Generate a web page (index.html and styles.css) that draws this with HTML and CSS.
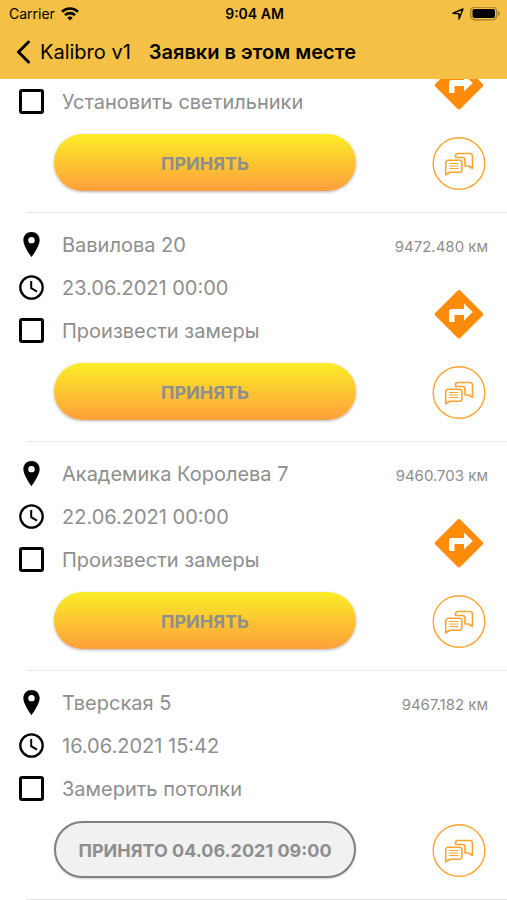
FILE: index.html
```html
<!DOCTYPE html>
<html lang="ru">
<head>
<meta charset="utf-8">
<meta name="viewport" content="width=device-width, initial-scale=1">
<title>Заявки в этом месте</title>
<link rel="stylesheet" href="styles.css">
</head>
<body>
<svg class="sprite" aria-hidden="true">
  <symbol id="pin" viewBox="0 0 24 24"><path fill-rule="evenodd" d="M12 0C7.500 0 4.200 3.400 4.200 7.800C4.200 13.600 12 24 12 24S19.800 13.600 19.800 7.800C19.800 3.400 16.500 0 12 0ZM12 4.700a3.100 3.100 0 1 1 0 6.200a3.100 3.100 0 0 1 0-6.200Z"/></symbol>
  <symbol id="clock" viewBox="0 0 25 25"><g fill="none" stroke="#000" stroke-width="2.300"><circle cx="12.500" cy="12.500" r="11.200"/><path stroke-width="2" d="M12.200 6v7.200l5.800 3.400"/></g></symbol>
  <symbol id="route" viewBox="0 0 50 50"><path fill="#ff8b0a" d="M23.500 .7a2.100 2.100 0 0 1 3 0l22 22a2.100 2.100 0 0 1 0 3l-22 22a2.100 2.100 0 0 1-3 0l-22-22a2.100 2.100 0 0 1 0-3z"/><path fill="#fff" d="M15 32V21.500a2.500 2.500 0 0 1 2.500-2.500H30v-5.500l8.800 8.500L30 30.500V25H20.500V32z"/></symbol>
  <symbol id="chat" viewBox="0 0 54 54"><g fill="none" stroke="#fba42f" stroke-linejoin="round" stroke-linecap="round"><circle cx="27" cy="26.500" r="25.800" stroke-width="1.400"/><g stroke-width="1.600"><path d="M13.700 25.500a2.200 2.200 0 0 1 2.200-2.200h11.800a2.200 2.200 0 0 1 2.200 2.200v7.500a2.200 2.200 0 0 1-2.200 2.200H18l-4.300 2.600z"/><path d="M23.500 20.500v-1.500a2.500 2.500 0 0 1 2.500-2.500h12a2.500 2.500 0 0 1 2.500 2.500v12.500l-4-2.500h-3.500v-6a2.500 2.500 0 0 0-2.500-2.500z"/></g><path stroke-width="1" d="M17.500 26.500h8.500M17.500 29h8.500M17.500 31.500h8.500"/></g></symbol>
</svg>

<header class="header">
  <div class="status">
    <span class="status-carrier">Carrier
      <svg width="18" height="14" viewBox="0 0 18 14" aria-hidden="true"><g fill="none" stroke="#000" stroke-width="2.600"><path d="M1 4.700a11.500 11.500 0 0 1 16 0"/><path d="M4 8.100a7.200 7.200 0 0 1 10 0"/></g><path d="M9 13.500l-2.700-2.800a3.900 3.900 0 0 1 5.400 0z"/></svg>
    </span>
    <span class="status-time">9:04 AM</span>
    <span class="status-icons">
      <svg width="12" height="12" viewBox="0 0 12 12" aria-hidden="true"><path fill="none" stroke="#000" stroke-width="1.400" stroke-linejoin="round" d="M1 5.200L11 1L7 11V5.700z"/></svg>
      <svg width="30" height="14" viewBox="0 0 30 14" aria-hidden="true"><rect x=".7" y=".2" width="26" height="12.600" rx="4" fill="none" stroke="#9d7c2c" stroke-width="1.200"/><rect x="2.500" y="2" width="22.500" height="9" rx="2"/><path fill="#9d7c2c" d="M28 4.200c2.300.6 2.300 4 0 4.600z"/></svg>
    </span>
  </div>
  <nav class="nav">
    <a class="back" href="#">
      <svg width="15" height="24" viewBox="0 0 15 24" aria-hidden="true"><path fill="none" stroke="#000" stroke-width="3" stroke-linecap="round" stroke-linejoin="round" d="M12.500 2L2.500 12l10 10"/></svg>
      Kalibro v1</a>
    <h1 class="title">Заявки в этом месте</h1>
  </nav>
</header>

<main>
  <ul class="list">
    <li class="card card-scrolled">
      <div class="info">
        <label class="row"><input class="check" type="checkbox">Установить светильники</label>
        <button class="accept" type="button">ПРИНЯТЬ</button>
      </div>
      <div class="side">
        <a class="route" href="#" aria-label="Маршрут"><svg><use href="#route"/></svg></a>
        <button class="chat" type="button" aria-label="Чат"><svg><use href="#chat"/></svg></button>
      </div>
    </li>
    <li class="card">
      <div class="info">
        <div class="row"><svg class="icon"><use href="#pin"/></svg>Вавилова 20</div>
        <div class="row"><svg class="icon"><use href="#clock"/></svg>23.06.2021 00:00</div>
        <label class="row"><input class="check" type="checkbox">Произвести замеры</label>
        <button class="accept" type="button">ПРИНЯТЬ</button>
      </div>
      <div class="side">
        <span class="distance">9472.480 км</span>
        <a class="route" href="#" aria-label="Маршрут"><svg><use href="#route"/></svg></a>
        <button class="chat" type="button" aria-label="Чат"><svg><use href="#chat"/></svg></button>
      </div>
    </li>
    <li class="card">
      <div class="info">
        <div class="row"><svg class="icon"><use href="#pin"/></svg>Академика Королева 7</div>
        <div class="row"><svg class="icon"><use href="#clock"/></svg>22.06.2021 00:00</div>
        <label class="row"><input class="check" type="checkbox">Произвести замеры</label>
        <button class="accept" type="button">ПРИНЯТЬ</button>
      </div>
      <div class="side">
        <span class="distance">9460.703 км</span>
        <a class="route" href="#" aria-label="Маршрут"><svg><use href="#route"/></svg></a>
        <button class="chat" type="button" aria-label="Чат"><svg><use href="#chat"/></svg></button>
      </div>
    </li>
    <li class="card">
      <div class="info">
        <div class="row"><svg class="icon"><use href="#pin"/></svg>Тверская 5</div>
        <div class="row"><svg class="icon"><use href="#clock"/></svg>16.06.2021 15:42</div>
        <label class="row"><input class="check" type="checkbox">Замерить потолки</label>
        <button class="accept accept-done" type="button">ПРИНЯТО 04.06.2021 09:00</button>
      </div>
      <div class="side">
        <span class="distance">9467.182 км</span>
        <button class="chat" type="button" aria-label="Чат"><svg><use href="#chat"/></svg></button>
      </div>
    </li>
  </ul>
</main>
</body>
</html>
```

FILE: styles.css
```css
* {
  box-sizing: border-box;
}

body {
  margin: 0;
  background: #fff;
  color: #000;
  font-family: Inter, "Liberation Sans", sans-serif;
}

svg {
  display: block;
  flex: none;
}

.sprite {
  display: none;
}

.header {
  padding-bottom: 5px;
  background: #f4c045;
}

.status {
  display: grid;
  grid-template-columns: 1fr auto 1fr;
  align-items: center;
  height: 27px;
  padding: 0 7px 0 9px;
  font-size: 14px;
}

.status-carrier,
.status-icons {
  display: flex;
  align-items: center;
  gap: 6px;
}

.status-icons {
  justify-content: flex-end;
}

.status-time {
  font-weight: 600;
}

.nav {
  display: flex;
  align-items: center;
  gap: 18px;
  height: 47px;
  padding: 3px 16px 0;
  font-size: 20px;
  white-space: nowrap;
}

.back {
  display: flex;
  align-items: center;
  gap: 9px;
  color: inherit;
  text-decoration: none;
}

.title {
  margin: 0;
  font-size: 20px;
  font-weight: 600;
}

.list {
  margin: 0;
  padding: 0;
  list-style: none;
}

.card {
  display: flex;
  padding-top: 10px;
  background: linear-gradient(#e6e6e8, #e6e6e8) 26px 100% / 100% 1px no-repeat;
}

/* Request partly scrolled under the header */
.card-scrolled {
  height: 134px;
  padding-top: 0;
  overflow: hidden;
}

.info {
  display: flex;
  flex: 1;
  flex-direction: column;
  justify-content: flex-end;
  padding: 0 0 22px 19px;
}

.row {
  display: flex;
  align-items: center;
  gap: 18px;
  height: 43px;
  color: #8e8e8e;
  font-size: 20px;
}

.icon {
  width: 25px;
  height: 25px;
  color: #000;
  fill: #000;
}

.check {
  appearance: none;
  flex: none;
  width: 25px;
  height: 25px;
  margin: 0;
  border: 3px solid #000;
  border-radius: 3px;
}

.accept {
  height: 57px;
  margin: 11px 0 0 35px;
  padding: 2px 0 0;
  border: 0;
  border-radius: 29px;
  background: linear-gradient(#faed27, #ff9f3c);
  box-shadow: 0 1px 3px rgba(0, 0, 0, 0.3);
  color: #8e8e8e;
  font: 700 18px Inter, "Liberation Sans", sans-serif;
}

.accept-done {
  border: 2px solid #808080;
  background: #f1f1f1;
  box-shadow: 0 1px 2px rgba(0, 0, 0, 0.2);
}

.side {
  display: flex;
  flex: none;
  flex-direction: column;
  align-items: flex-end;
  justify-content: flex-end;
  width: 151px;
  padding: 0 21px 22px 0;
}

.distance {
  margin: 0 -2px auto 0;
  color: #8e8e8e;
  font-size: 15px;
  line-height: 47px;
}

.route {
  margin: 0 2px 26px 0;
}

.route svg {
  width: 50px;
  height: 50px;
}

.chat {
  padding: 0;
  border: 0;
  background: none;
}

.chat svg {
  width: 54px;
  height: 54px;
}
```
